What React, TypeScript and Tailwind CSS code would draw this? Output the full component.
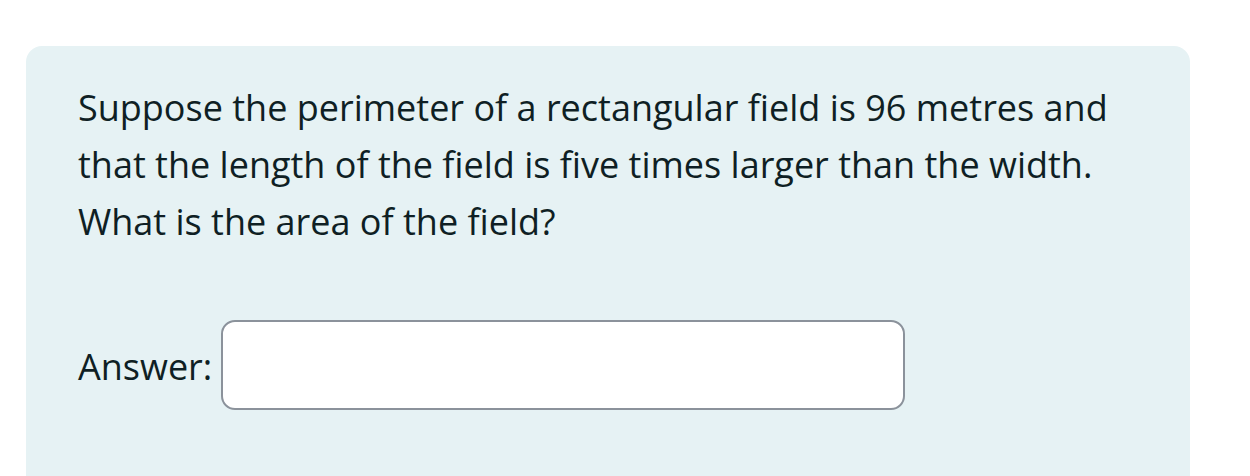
export default function App() {
  return (
    <div className="min-h-[476px] bg-white pt-[46px] px-[26px] pr-[60px]" style={{ fontFamily: '"Open Sans", sans-serif' }}>
      <div className="rounded-t-[16px] bg-[#e6f2f4] pl-[52px] pt-[33px] pb-[70px] text-[#0f1f24]">
        <p className="text-[36px] leading-[57px]">
          Suppose the perimeter of a rectangular field is 96 metres and
          <br />
          that the length of the field is five times larger than the width.
          <br />
          What is the area of the field?
        </p>
        <div className="mt-[70px] flex items-center gap-[9px]">
          <label className="text-[36px] pt-[4px]">Answer:</label>
          <input
            type="text"
            className="h-[90px] w-[684px] rounded-[14px] border-2 border-[#8b929b] bg-white"
          />
        </div>
      </div>
    </div>
  );
}
